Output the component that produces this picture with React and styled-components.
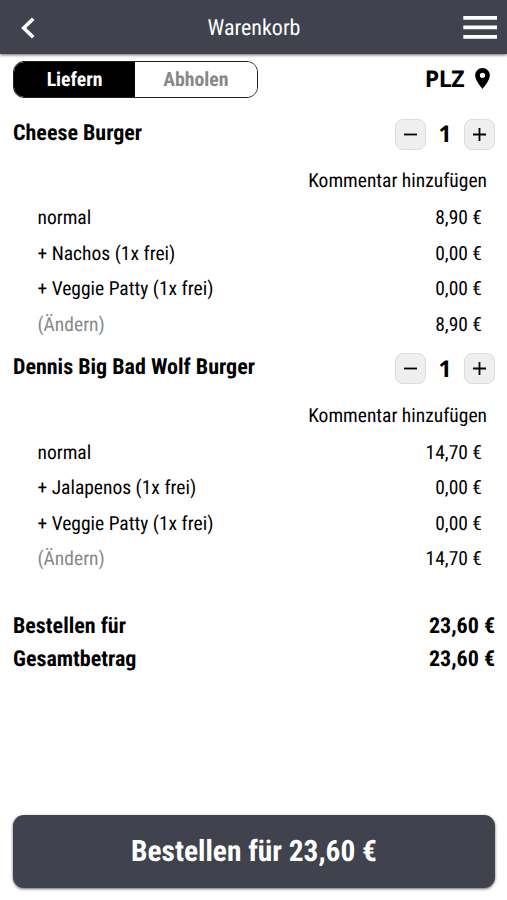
import React from 'react'
import styled, { createGlobalStyle } from 'styled-components'

const GlobalStyle = createGlobalStyle`
  *{
    box-sizing:border-box;
  }
  body{
    margin:0;
    background-color:#fff;
    color:#000;
    font-family:"Roboto Condensed", Roboto, sans-serif;
    font-stretch:75%;
    font-size:19.5px;
    text-rendering:geometricPrecision;
  }
  button{
    border:none;
    padding:0;
    background:none;
    color:inherit;
    font:inherit;
    font-stretch:inherit;
    text-rendering:inherit;
    cursor:pointer;
  }
`

const Page = styled.div`
  height:900px;
  display:flex;
  flex-direction:column;
`

const Header = styled.header`
  height:54px;
  flex:none;
  display:grid;
  grid-template-columns:34px 1fr 34px;
  align-items:center;
  padding:1px 10px 0 11px;
  background-color:#40424d;
  color:#fff;
  box-shadow:0 1px 3px rgba(0,0,0,.6);
  svg{
    display:block;
    justify-self:center;
  }
`

const Title = styled.h1`
  margin:0;
  padding-top:1px;
  font-size:22px;
  font-weight:400;
  text-align:center;
`

const TopBar = styled.div`
  flex:none;
  display:flex;
  justify-content:space-between;
  align-items:center;
  height:37px;
  margin:7px 17px 20px 13px;
`

const Toggle = styled.div`
  display:flex;
  width:244.5px;
  height:37px;
  border:1px solid #222;
  border-radius:11px;
  overflow:hidden;
`

const ToggleItem = styled.button`
  width:50%;
  padding-bottom:1px;
  font-size:19.8px;
  font-weight:700;
  color:${p => p.$active ? '#fff' : '#888'};
  background-color:${p => p.$active ? '#000' : '#fff'};
`

const Plz = styled.button`
  display:flex;
  align-items:center;
  gap:11px;
  padding-bottom:3px;
  font-family:"Open Sans", sans-serif;
  font-stretch:normal;
  font-size:23px;
  font-weight:700;
  letter-spacing:-.5px;
`

const Item = styled.section`
  flex:none;
  height:234.5px;
`

const ItemHead = styled.div`
  display:flex;
  justify-content:space-between;
  align-items:center;
  height:32px;
  margin:0 12px 0 13px;
  h2{
    margin:0 0 2px;
    font-size:22px;
    font-weight:700;
  }
`

const Counter = styled.div`
  display:flex;
  align-items:center;
  height:30px;
  span{
    width:38px;
    padding-bottom:2px;
    text-align:center;
    font-family:"Noto Sans", sans-serif;
    font-stretch:normal;
    font-size:23px;
    font-weight:700;
  }
`

const Step = styled.button`
  display:flex;
  align-items:center;
  justify-content:center;
  width:31px;
  height:31px;
  border:1px solid #dcdcdc;
  border-radius:8px;
  background-color:#efefef;
`

const Comment = styled.div`
  height:37px;
  margin:13px 20px 0 0;
  line-height:36px;
  text-align:right;
`

const Line = styled.div`
  display:flex;
  justify-content:space-between;
  height:35.5px;
  line-height:35px;
  padding:0 25px 0 37.5px;
  span:first-child{
    color:${p => p.$muted ? '#888' : '#000'};
  }
`

const Totals = styled.div`
  margin:23px 12px 0 13px;
  font-size:22px;
  font-weight:700;
  div{
    display:flex;
    justify-content:space-between;
    height:33px;
    line-height:33px;
  }
`

const OrderButton = styled.button`
  flex:none;
  height:73px;
  margin:auto 12px 12px 13px;
  border-radius:11px;
  background-color:#40424d;
  color:#fff;
  font-size:29.4px;
  font-weight:700;
  box-shadow:0 1px 3px rgba(0,0,0,.6);
`

const items = [
  {
    name: 'Cheese Burger',
    total: '8,90 €',
    lines: [['normal', '8,90 €'], ['+ Nachos (1x frei)', '0,00 €'], ['+ Veggie Patty (1x frei)', '0,00 €']]
  },
  {
    name: 'Dennis Big Bad Wolf Burger',
    total: '14,70 €',
    lines: [['normal', '14,70 €'], ['+ Jalapenos (1x frei)', '0,00 €'], ['+ Veggie Patty (1x frei)', '0,00 €']]
  }
]

const StepIcon = ({ plus }) => (
  <svg width="15" height="15" viewBox="0 0 15 15" stroke="#000" strokeWidth="1.8">
    <path d={plus ? 'M1 7.5h13M7.5 1v13' : 'M1 7.5h13'} />
  </svg>
)

const CartItem = ({ item }) => (
  <Item>
    <ItemHead>
      <h2>{item.name}</h2>
      <Counter>
        <Step><StepIcon /></Step>
        <span>1</span>
        <Step><StepIcon plus /></Step>
      </Counter>
    </ItemHead>
    <Comment>Kommentar hinzufügen</Comment>
    {item.lines.map(([label, price]) => (
      <Line key={label}><span>{label}</span><span>{price}</span></Line>
    ))}
    <Line $muted><span>(Ändern)</span><span>{item.total}</span></Line>
  </Item>
)

const App = () => (
  <Page>
    <GlobalStyle />
    <Header>
      <svg width="16" height="22" viewBox="0 0 16 22" fill="none" stroke="#fff" strokeWidth="3.6">
        <path d="M13.2 1.7L3.7 11l9.5 9.3" />
      </svg>
      <Title>Warenkorb</Title>
      <svg width="34" height="23" viewBox="0 0 34 23" fill="#fff">
        <path d="M.3 0H34v3.7H.3zM.3 9.5H34v3.7H.3zM.3 19H34v3.7H.3z" />
      </svg>
    </Header>
    <TopBar>
      <Toggle>
        <ToggleItem $active>Liefern</ToggleItem>
        <ToggleItem>Abholen</ToggleItem>
      </Toggle>
      <Plz>
        PLZ
        <svg width="15" height="21" viewBox="5 2 14 20">
          <path d="M12 2C8.13 2 5 5.13 5 9c0 5.25 7 13 7 13s7-7.75 7-13c0-3.87-3.13-7-7-7zm0 9.5a2.5 2.5 0 0 1 0-5 2.5 2.5 0 0 1 0 5z" />
        </svg>
      </Plz>
    </TopBar>
    {items.map(item => <CartItem key={item.name} item={item} />)}
    <Totals>
      <div><span>Bestellen für</span><span>23,60 €</span></div>
      <div><span>Gesamtbetrag</span><span>23,60 €</span></div>
    </Totals>
    <OrderButton>Bestellen für 23,60 €</OrderButton>
  </Page>
)

export default App
